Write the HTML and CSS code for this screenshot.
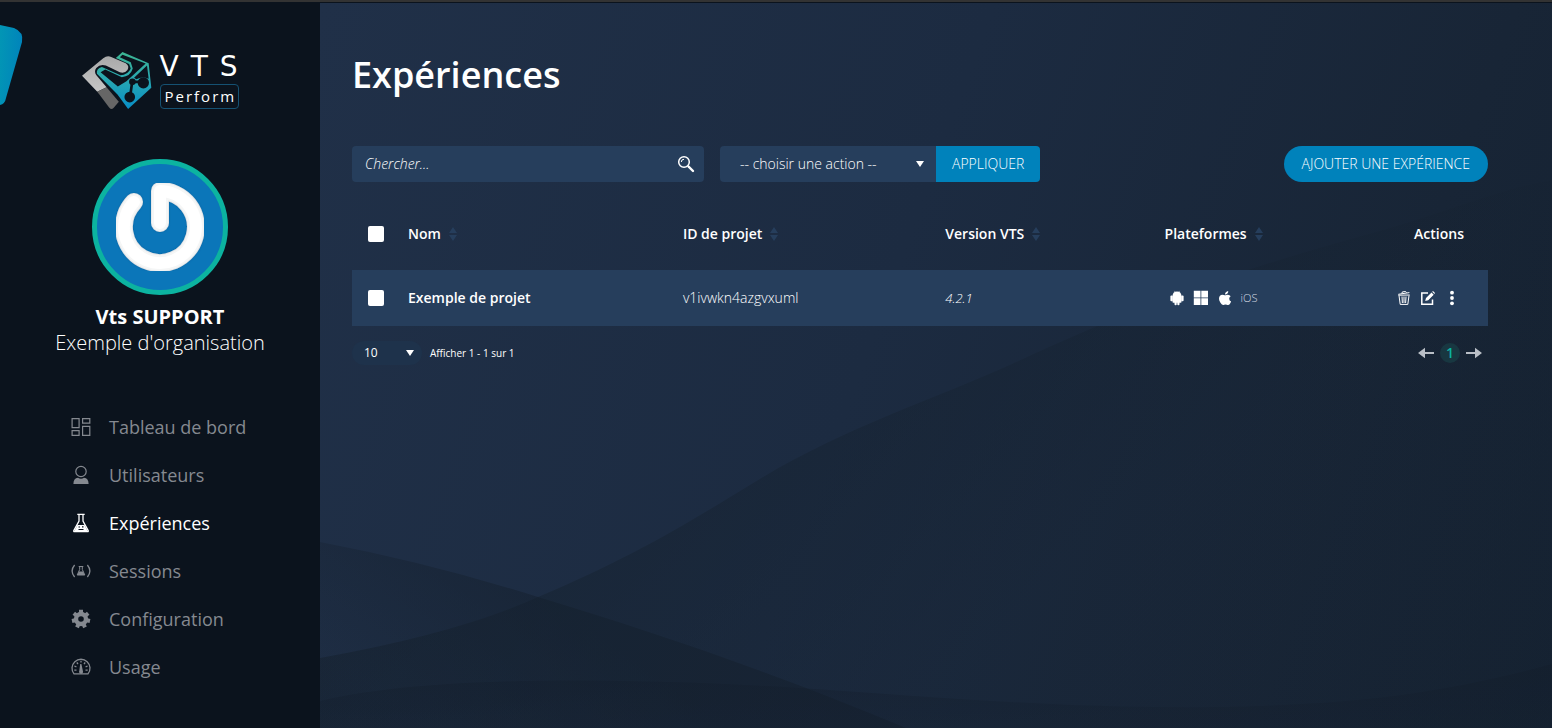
FILE: index.html
```html
<!DOCTYPE html>
<html lang="fr">
<head>
<meta charset="utf-8">
<title>VTS Perform - Expériences</title>
<link rel="stylesheet" href="styles.css">
</head>
<body>
<div class="app">
  <aside class="sidebar">
    <svg class="corner" viewBox="0 0 24 84" aria-hidden="true">
      <defs><linearGradient id="cornerFill" x1="0" y1="0" x2="1" y2="0.2"><stop offset="0" stop-color="#0296b5"/><stop offset="1" stop-color="#0084bb"/></linearGradient></defs>
      <path d="M0 1 14 4Q24 8 22 18L6 74Q5 80 0 81Z" fill="url(#cornerFill)"/>
    </svg>
    <a class="brand" href="#">
      <svg class="brand-mark" viewBox="240 150 220 184" aria-hidden="true">
        <defs>
          <linearGradient id="markBlue" x1="0" y1="0" x2="0" y2="1"><stop offset="0" stop-color="#3db592"/><stop offset=".45" stop-color="#2aa9b0"/><stop offset="1" stop-color="#078dc6"/></linearGradient>
          <linearGradient id="markGray" x1="0" y1="0" x2="0" y2="1"><stop offset="0" stop-color="#a9a9a9"/><stop offset="1" stop-color="#c6c6c6"/></linearGradient>
        </defs>
        <path d="M368 156 447 190 455 264 385 328 353 284 291 222Q288 206 306 201L362 226Q384 226 393 206L388 192 348 174Z" fill="url(#markBlue)"/>
        <path d="M368 164 438 191 380 244 354 260 302 217 316 209 366 232Q392 230 399 206L393 187 360 172Z" fill="#0b131d"/>
        <path d="M442 197 447 237Q428 228 410 238L403 234Z" fill="#0b131d"/>
        <path d="M246 228 310 175Q322 165 334 171L378 190Q390 198 383 210 374 222 360 217L318 197Q300 192 289 204 281 215 290 227L320 262 292 276Z" fill="url(#markGray)"/>
        <path d="M292 276 320 262 357 306 341 325Q335 331 329 325Z" fill="#666"/>
        <g fill="#0b131d"><circle cx="398" cy="246" r="10"/><circle cx="431" cy="249" r="17"/><circle cx="390" cy="292" r="16"/></g>
        <path d="M398 246H431M397 248 391 292" stroke="#0b131d" stroke-width="8"/>
      </svg>
      <span class="brand-text">
        <span class="brand-name">VTS</span>
        <span class="brand-product">Perform</span>
      </span>
    </a>

    <div class="profile">
      <svg class="avatar" viewBox="0 0 136 136" aria-hidden="true">
        <defs>
          <filter id="soft" x="-10%" y="-10%" width="120%" height="120%"><feDropShadow dx="0" dy="0" stdDeviation="1" flood-color="#0a4f85" flood-opacity=".5"/></filter>
        </defs>
        <circle cx="68" cy="68" r="65.5" fill="#0b76b9" stroke="#0cb3a0" stroke-width="5"/>
        <g fill="none" stroke-linecap="round" stroke-linejoin="round" filter="url(#soft)">
          <path d="M42 43A36 36 0 1 0 68 32V64" stroke="#e6e8ea" stroke-width="18"/>
          <path d="M42 43A36 36 0 1 0 68 32V64" stroke="#f5f6f6" stroke-width="16"/>
          <path d="M42 43A36 36 0 1 0 68 32V64" stroke="#fff" stroke-width="12"/>
        </g>
      </svg>
      <strong class="profile-name">Vts SUPPORT</strong>
      <span class="profile-org">Exemple d'organisation</span>
    </div>

    <nav class="menu">
      <a class="menu-item" href="#">
        <svg viewBox="0 0 20 20" fill="none" stroke="currentColor" stroke-width="1.2" aria-hidden="true"><path d="M1.1 1.6h7v9h-7zM11.6 1.6h7.2v4.6h-7.2zM1.1 13.6h7v4.8h-7zM11.6 9.3h7.2v9.1h-7.2z"/></svg>
        Tableau de bord</a>
      <a class="menu-item" href="#">
        <svg viewBox="0 0 20 20" aria-hidden="true"><circle cx="10" cy="6.5" r="5.2" fill="none" stroke="currentColor" stroke-width="1.2"/><path d="M2.4 19Q2.4 13.3 7 12.8 10 14.6 13 12.8 17.6 13.3 17.6 19Z" fill="currentColor"/></svg>
        Utilisateurs</a>
      <a class="menu-item menu-item-active" href="#" aria-current="page">
        <svg viewBox="0 0 20 20" aria-hidden="true"><path d="M6.3 1.3h7.4M8 1.5V8L2.8 17.6q-.4 1 .6 1h13.2q1 0 .6-1L12 8V1.5" fill="none" stroke="currentColor" stroke-width="1.3"/><path d="M6.500 12h7l3.500 6.500H3Z" fill="currentColor"/><path d="M7.500 14h1.500M11 13.800h1.500M7.500 16.500h5" stroke="#0b131d" stroke-width="1.200"/></svg>
        Expériences</a>
      <a class="menu-item" href="#">
        <svg viewBox="0 0 20 20" aria-hidden="true"><path d="M3.6 4Q-1.4 10 3.6 16M16.4 4Q21.4 10 16.4 16" fill="none" stroke="currentColor" stroke-width="1.3"/><path d="M7.700 5.500h4.600M8.700 5.500v3L6.200 14h7.600L11.300 8.500v-3" fill="none" stroke="currentColor"/><path d="M8 10.500h4l1.700 3.500H6.300z" fill="currentColor"/></svg>
        Sessions</a>
      <a class="menu-item" href="#">
        <svg viewBox="0 0 20 20" aria-hidden="true"><circle cx="10" cy="10" r="5" fill="none" stroke="currentColor" stroke-width="4.4"/><path d="M10 4V.8M14.7 6.3 17.2 4.3M15.9 11.3 19 12M12.6 15.4 14 18.3M7.4 15.4 6 18.3M4.1 11.3 1 12M5.3 6.3 2.8 4.3" stroke="currentColor" stroke-width="4"/></svg>
        Configuration</a>
      <a class="menu-item" href="#">
        <svg viewBox="0 0 20 20" aria-hidden="true"><path d="M3 16.9A9 9 0 1 1 17 16.9Z" fill="none" stroke="currentColor" stroke-width="1.3" stroke-linejoin="round"/><path d="M9.2 7h1.200l1.500 7a2 2 0 1 1-3.600-.2Z" fill="currentColor"/><path d="M10 3.800v1.700M5.800 5.500 7 7M14.200 5.500 13 7M3.400 9l2 .8M16.600 9l-2 .8M3.300 13.200h2.200M16.700 13.200h-2.200" stroke="currentColor" stroke-width="1.300"/></svg>
        Usage</a>
    </nav>
  </aside>

  <main class="content">
    <svg class="backdrop" viewBox="0 0 1232 725" preserveAspectRatio="none" aria-hidden="true">
      <defs>
        <linearGradient id="waveA" gradientUnits="userSpaceOnUse" x1="400" y1="350" x2="640" y2="650"><stop offset="0" stop-color="#15212e" stop-opacity=".55"/><stop offset="1" stop-color="#15212e" stop-opacity=".15"/></linearGradient>
        <linearGradient id="waveB" gradientUnits="userSpaceOnUse" x1="220" y1="590" x2="120" y2="730"><stop offset="0" stop-color="#141f2c" stop-opacity=".5"/><stop offset="1" stop-color="#141f2c" stop-opacity=".1"/></linearGradient>
        <linearGradient id="waveC" x1="0" y1="0" x2="0" y2="1"><stop offset="0" stop-color="#131d2b" stop-opacity=".45"/><stop offset="1" stop-color="#131d2b" stop-opacity=".2"/></linearGradient>
      </defs>
      <path d="M0 655Q140 630 218 594C310 555 360 525 430 482 520 426 610 398 690 362 840 292 930 264 1060 228 1130 208 1180 186 1232 177V725H0Z" fill="url(#waveA)"/>
      <path d="M0 539Q110 560 218 594C330 628 450 668 586 725H0Z" fill="url(#waveB)"/>
      <path d="M0 698C120 670 330 676 480 685 640 696 760 706 900 704 1040 701 1120 691 1232 661V725H0Z" fill="url(#waveC)"/>
    </svg>
    <div class="page">
      <h1 class="page-title">Expériences</h1>

      <div class="toolbar">
        <form class="search" role="search">
          <input class="search-input" type="text" placeholder="Chercher..." aria-label="Chercher">
          <button class="search-button" type="button" aria-label="Chercher">
            <svg viewBox="0 0 18 18" fill="none" stroke="currentColor" aria-hidden="true"><circle cx="7" cy="7" r="5.3" stroke-width="1.5"/><path d="M4.300 7A2.700 2.700 0 0 1 7 4.300" stroke-width="1"/><path d="M11.500 11.500 16 16" stroke-width="2.400" stroke-linecap="round"/></svg>
          </button>
        </form>
        <form class="bulk">
          <div class="select-wrap">
            <select class="bulk-select" aria-label="Action"><option>-- choisir une action --</option></select>
          </div>
          <button class="bulk-apply" type="button">APPLIQUER</button>
        </form>
        <button class="add-button" type="button">AJOUTER UNE EXPÉRIENCE</button>
      </div>

      <table class="grid">
        <colgroup><col class="col-check"><col class="col-name"><col class="col-id"><col class="col-version"><col class="col-platform"><col class="col-actions"></colgroup>
        <thead>
          <tr>
            <th class="check-cell"><input class="check" type="checkbox" aria-label="Tout sélectionner"></th>
            <th><button class="sort" type="button">Nom <svg viewBox="0 0 8 14" aria-hidden="true"><path d="M4 0 8 6H0ZM0 8H8L4 14Z" fill="currentColor"/></svg></button></th>
            <th><button class="sort" type="button">ID de projet <svg viewBox="0 0 8 14" aria-hidden="true"><path d="M4 0 8 6H0ZM0 8H8L4 14Z" fill="currentColor"/></svg></button></th>
            <th><button class="sort" type="button">Version VTS <svg viewBox="0 0 8 14" aria-hidden="true"><path d="M4 0 8 6H0ZM0 8H8L4 14Z" fill="currentColor"/></svg></button></th>
            <th><button class="sort" type="button">Plateformes <svg viewBox="0 0 8 14" aria-hidden="true"><path d="M4 0 8 6H0ZM0 8H8L4 14Z" fill="currentColor"/></svg></button></th>
            <th class="actions-cell">Actions</th>
          </tr>
        </thead>
        <tbody>
          <tr>
            <td class="check-cell"><input class="check" type="checkbox" aria-label="Sélectionner Exemple de projet"></td>
            <td class="name">Exemple de projet</td>
            <td>v1ivwkn4azgvxuml</td>
            <td class="version">4.2.1</td>
            <td>
              <div class="icons">
                <span class="icon"><svg viewBox="0 0 16 16" fill="currentColor" role="img" aria-label="Android"><path d="M3.500 5.800Q3.900 1.500 8 1.500T12.500 5.800V12q0 .8-.8.8h-1.200v1.400q0 1-1.100 1T8.300 14.200v-1.400h-.6v1.400q0 1-1.100 1T5.500 14.200v-1.400H4.300q-.8 0-.8-.8Z"/><rect x="1.400" y="5.600" width="2.400" height="5.600" rx="1"/><rect x="12.200" y="5.600" width="2.400" height="5.600" rx="1"/><path d="M5.400.9 6.400 2.600M10.600.9 9.600 2.600" stroke="currentColor" stroke-width=".5"/></svg></span>
                <span class="icon"><svg viewBox="0 0 16 16" fill="currentColor" role="img" aria-label="Windows"><path d="M.8.800h6.700v6.700H.8zM8.300.800H15v6.700H8.300zM.8 8.300h6.700V15H.8zM8.300 8.300H15V15H8.300z"/></svg></span>
                <span class="icon"><svg viewBox="0 0 16 16" fill="currentColor" role="img" aria-label="Apple"><path d="M11.200 1q.2 1.500-.8 2.600T8 4.600Q7.900 3.200 8.900 2.200T11.200 1ZM8.200 5.300q.6 0 1.300-.3t1.400-.3q1.800 0 2.800 1.500-1.500.9-1.500 2.500 0 2 1.900 2.800-.3 1-1.100 2.200T11 15q-.6 0-1.200-.3t-1.300-.3-1.300.3-1.200.3Q4.600 15 3.300 12.600T2 8.700q0-1.800 1-2.900t2.400-1.100q.7 0 1.500.3t1.300.3Z"/></svg></span>
                <span class="ios">iOS</span>
              </div>
            </td>
            <td class="actions-cell">
              <div class="icons icons-end">
                <button class="icon" type="button" aria-label="Supprimer"><svg viewBox="0 0 16 16" fill="none" stroke="currentColor" aria-hidden="true"><path d="M2.300 5.200 13.700 5M2.300 4.300 13.400 2.600M5.800 3.400 6.400 1.900 9.600 1.500 10.500 2.700M3 5.500 4.200 14.400H11.800L13 5.500M6 6.500 6.400 13M8 6.500V13M10 6.500 9.600 13" stroke-width="1"/></svg></button>
                <button class="icon" type="button" aria-label="Modifier"><svg viewBox="0 0 16 16" aria-hidden="true"><path d="M8 3H1.800V14.200H12.500V9.500" fill="none" stroke="currentColor" stroke-width="1.500"/><path d="M5.200 11 6 8 11.500 2.500 13.700 4.700 8.200 10.200ZM12.200 1.800 13 1.100 15 3.100 14.400 4Z" fill="currentColor"/></svg></button>
                <button class="icon" type="button" aria-label="Plus d'actions"><svg viewBox="0 0 16 16" fill="currentColor" aria-hidden="true"><circle cx="8" cy="2.700" r="1.900"/><circle cx="8" cy="8" r="1.900"/><circle cx="8" cy="13.300" r="1.900"/></svg></button>
              </div>
            </td>
          </tr>
        </tbody>
      </table>

      <div class="pager">
        <div class="select-wrap select-wrap-small">
          <select class="page-size" aria-label="Lignes par page"><option>10</option></select>
        </div>
        <span class="summary">Afficher 1 - 1 sur 1</span>
        <div class="pages">
          <button class="page-arrow" type="button" aria-label="Page précédente"><svg viewBox="0 0 16 12" aria-hidden="true"><path d="M0 6 7 .8V4.900H16V7.100H7V11.200Z" fill="currentColor"/></svg></button>
          <button class="page-number" type="button" aria-current="page">1</button>
          <button class="page-arrow" type="button" aria-label="Page suivante"><svg viewBox="0 0 16 12" aria-hidden="true"><path d="M16 6 9 .8V4.900H0V7.100H9V11.200Z" fill="currentColor"/></svg></button>
        </div>
      </div>
    </div>
  </main>
</div>
</body>
</html>
```
FILE: styles.css
```css
* {
  box-sizing: border-box;
}

body {
  margin: 0;
  background: #0b131d;
  color: #fff;
  font: 300 14px/20px "Open Sans", "Noto Sans", sans-serif;
}

button,
input,
select {
  margin: 0;
  border: 0;
  padding: 0;
  background: none;
  color: inherit;
  font: inherit;
}

.app {
  display: flex;
  min-height: 100vh;
  border-top: 2px solid #333;
  padding-top: 1px;
}

.sidebar {
  position: relative;
  display: flex;
  flex: none;
  flex-direction: column;
  align-items: center;
  width: 320px;
  padding: 47px 0 24px;
}

.corner {
  position: absolute;
  top: 21px;
  left: 0;
  width: 24px;
  height: 84px;
}

.brand {
  display: flex;
  align-items: center;
  gap: 7px;
  padding-right: 2px;
  color: #fff;
  text-decoration: none;
}

.brand-mark {
  width: 73px;
  height: 61px;
}

.brand-text {
  display: flex;
  flex-direction: column;
  gap: 2px;
}

.brand-name {
  width: 79px;
  font: 400 28px/30px "DejaVu Sans", sans-serif;
  letter-spacing: 12px;
}

.brand-product {
  width: 79px;
  padding-left: 4px;
  border: 1px solid #155172;
  border-radius: 4px;
  font-size: 15px;
  font-weight: 400;
  line-height: 23px;
  letter-spacing: 2px;
}

.profile {
  display: flex;
  flex-direction: column;
  align-items: center;
  margin-top: 48px;
  font-size: 20px;
  line-height: 26px;
}

.avatar {
  width: 136px;
  height: 136px;
  margin-bottom: 9px;
}

.profile-name {
  font-weight: 700;
}

.menu {
  display: flex;
  flex-direction: column;
  align-self: stretch;
  margin-top: 47px;
  padding-left: 71px;
}

.menu-item {
  display: flex;
  align-items: center;
  gap: 18px;
  height: 48px;
  color: #858990;
  font-size: 18px;
  font-weight: 400;
  text-decoration: none;
}

.menu-item svg {
  width: 20px;
  height: 20px;
}

.menu-item-active {
  color: #fff;
}

.content {
  position: relative;
  flex: 1;
  min-width: 0;
  background: linear-gradient(110deg, #203048 0%, #1c2b41 45%, #182536 80%, #152232 100%);
}

.backdrop {
  position: absolute;
  inset: 0;
  width: 100%;
  height: 100%;
}

.page {
  position: relative;
  padding: 48px 64px 48px 32px;
}

.page-title {
  margin: 0 0 47px;
  font-size: 36px;
  font-weight: 600;
  line-height: 48px;
}

.toolbar {
  display: flex;
  gap: 16px;
  margin-bottom: 24px;
}

.search {
  display: flex;
  width: 352px;
  border-radius: 4px;
  background: #263e5c;
}

.search-input {
  flex: 1;
  min-width: 0;
  height: 36px;
  padding: 0 0 2px 13px;
}

.search-input::placeholder {
  color: #fff;
  font-style: italic;
  opacity: 1;
}

.search-button {
  display: grid;
  place-items: center;
  width: 36px;
}

.search-button svg {
  width: 18px;
  height: 18px;
}

.bulk {
  display: flex;
}

.select-wrap {
  position: relative;
}

.select-wrap::after {
  content: "";
  position: absolute;
  top: 50%;
  right: 12px;
  width: 8px;
  height: 6px;
  margin-top: -3px;
  background: #fff;
  clip-path: polygon(0 0, 100% 0, 50% 100%);
  pointer-events: none;
}

.select-wrap-small::after {
  right: 8px;
}

.bulk-select {
  appearance: none;
  width: 216px;
  height: 36px;
  padding-left: 20px;
  border-radius: 4px 0 0 4px;
  background: #263e5c;
}

.bulk-apply {
  height: 36px;
  padding: 0 16px;
  border-radius: 0 4px 4px 0;
  background: #0082bb;
}

.add-button {
  height: 36px;
  margin-left: auto;
  padding: 0 18px;
  border-radius: 18px;
  background: #0082bb;
}

.grid {
  width: 100%;
  table-layout: fixed;
  border-collapse: collapse;
}

.col-check {
  width: 56px;
}

.col-name {
  width: 24.2%;
}

.col-id {
  width: 23.1%;
}

.col-version {
  width: 19.3%;
}

.col-actions {
  width: 12%;
}

.grid th,
.grid td {
  height: 56px;
  padding: 0;
  text-align: left;
}

.grid th {
  height: 64px;
  padding-bottom: 8px;
  font-weight: 600;
}

.grid tbody tr {
  background: #263e5c;
}

.grid .check-cell {
  padding-left: 16px;
}

.grid .actions-cell {
  padding-right: 24px;
  text-align: right;
}

.check {
  appearance: none;
  display: block;
  width: 16px;
  height: 16px;
  border-radius: 2px;
  background: #fff;
}

.sort {
  display: flex;
  align-items: center;
  gap: 8px;
}

.sort svg {
  width: 8px;
  height: 14px;
  color: #263e5c;
}

.name {
  font-weight: 600;
}

.version {
  font-size: 13px;
  font-style: italic;
}

.icons {
  display: flex;
  align-items: center;
}

.icons-end {
  justify-content: flex-end;
}

.icon {
  display: grid;
  place-items: center;
  width: 24px;
  height: 24px;
}

.icon svg {
  width: 16px;
  height: 16px;
}

.ios {
  padding-left: 4px;
  font-size: 11px;
  color: #d4dae2;
}

.pager {
  display: flex;
  align-items: center;
  margin-top: 15px;
}

.page-size {
  appearance: none;
  width: 70px;
  height: 24px;
  padding-left: 12px;
  border-radius: 12px;
  background: #1e324b;
  font-size: 12px;
  font-weight: 400;
}

.summary {
  padding-left: 8px;
  font-size: 10px;
  font-weight: 400;
}

.pages {
  display: flex;
  align-items: center;
  gap: 6px;
  margin-left: auto;
  padding-right: 6px;
}

.page-arrow {
  color: #b9bec6;
}

.page-arrow svg {
  display: block;
  width: 16px;
  height: 12px;
}

.page-number {
  width: 20px;
  height: 20px;
  border-radius: 10px;
  background: #183741;
  color: #0cb3a0;
  font-weight: 600;
}
```
